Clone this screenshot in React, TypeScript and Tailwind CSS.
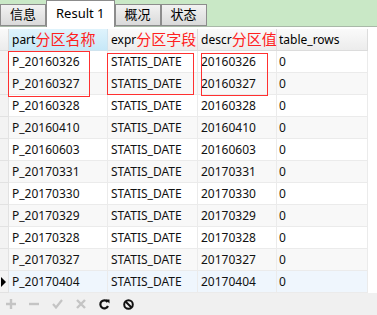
const rows = [
  ['P_20160326', 'STATIS_DATE', '20160326', '0'],
  ['P_20160327', 'STATIS_DATE', '20160327', '0'],
  ['P_20160328', 'STATIS_DATE', '20160328', '0'],
  ['P_20160410', 'STATIS_DATE', '20160410', '0'],
  ['P_20160603', 'STATIS_DATE', '20160603', '0'],
  ['P_20170331', 'STATIS_DATE', '20170331', '0'],
  ['P_20170330', 'STATIS_DATE', '20170330', '0'],
  ['P_20170329', 'STATIS_DATE', '20170329', '0'],
  ['P_20170328', 'STATIS_DATE', '20170328', '0'],
  ['P_20170327', 'STATIS_DATE', '20170327', '0'],
  ['P_20170404', 'STATIS_DATE', '20170404', '0'],
]

const font = { fontFamily: '"Noto Sans", "Noto Sans CJK SC", sans-serif' }
const cols = 'grid grid-cols-[9px_99px_90px_79px_91px_9px]'

function Tab({ label, active }: { label: string; active?: boolean }) {
  if (active) {
    return (
      <div className="h-[27px] -mb-px px-[9px] flex items-center bg-white border border-b-0 border-[#8c8c8c] text-[13px] text-black z-10">
        {label}
      </div>
    )
  }
  return (
    <div className="h-[22px] w-[46px] flex items-center justify-center bg-gradient-to-b from-[#f2f2f2] to-[#dadada] border border-[#8c8c8c] text-[13px] text-black">
      {label}
    </div>
  )
}

export default function App() {
  return (
    <div className="w-[377px] h-[315px] bg-white overflow-hidden flex flex-col" style={font}>
      {/* tabs */}
      <div className="h-[27px] shrink-0 flex items-end bg-[#c9e8c6] border-b border-[#a9b9a8]">
        <Tab label="信息" />
        <Tab label="Result 1" active />
        <Tab label="概况" />
        <Tab label="状态" />
      </div>
      <div className="h-[2px] shrink-0" />

      <div className="relative flex-1">
        {/* header */}
        <div className={`${cols} h-[22px] text-[12px] text-black`}>
          <div className="bg-gradient-to-b from-[#fafafa] to-[#ececec] border-r border-b border-[#dcdcdc]" />
          <div className="flex items-center pl-[3px] bg-gradient-to-b from-[#dff3fc] to-[#c6e8f8] border-r border-b border-[#cfe3ee] whitespace-nowrap">
            part<span className="text-[15px] leading-none text-[#ff2020]">分区名称</span>
          </div>
          <div className="flex items-center pl-[3px] bg-gradient-to-b from-[#fafafa] to-[#ececec] border-r border-b border-[#dcdcdc] whitespace-nowrap overflow-visible">
            expr<span className="text-[15px] leading-none text-[#ff2020]">分区字段</span>
          </div>
          <div className="flex items-center pl-[3px] bg-gradient-to-b from-[#fafafa] to-[#ececec] border-r border-b border-[#dcdcdc] whitespace-nowrap">
            descr<span className="text-[15px] leading-none text-[#ff2020]">分区值</span>
          </div>
          <div className="flex items-center pl-[2px] bg-gradient-to-b from-[#fafafa] to-[#ececec] border-r border-b border-[#dcdcdc]">
            table_rows
          </div>
          <div className="bg-white" />
        </div>

        {/* rows */}
        {rows.map((r, i) => {
          const last = i === rows.length - 1
          const bg = last ? 'bg-[#eff6fd]' : i % 2 === 1 ? 'bg-[#f8f8f8]' : 'bg-white'
          return (
            <div key={i} className={`${cols} h-[22px] text-[12px] text-[#111]`}>
              <div className="flex items-center bg-[#f3f3f3] border-r border-b border-[#e2e2e2]">
                {last && (
                  <svg width="6" height="10" viewBox="0 0 6 10" className="ml-[1px]">
                    <path d="M0 0 L5 5 L0 10 Z" fill="#000" />
                  </svg>
                )}
              </div>
              <div className={`flex items-center pl-[3px] ${bg} border-r border-b border-[#ebebeb]`}>{r[0]}</div>
              <div className={`flex items-center pl-[3px] ${bg} border-r border-b border-[#ebebeb]`}>{r[1]}</div>
              <div className={`flex items-center pl-[3px] ${bg} border-r border-b border-[#ebebeb]`}>{r[2]}</div>
              <div className={`flex items-center pl-[2px] ${bg} border-r border-b border-[#ebebeb]`}>{r[3]}</div>
              <div className="bg-white" />
            </div>
          )
        })}

        {/* red annotation boxes */}
        <div className="absolute left-[8px] top-[22px] w-[82px] h-[46px] border border-[#ff3030]" />
        <div className="absolute left-[107px] top-[24px] w-[87px] h-[42px] border border-[#ff3030]" />
        <div className="absolute left-[201px] top-[24px] w-[67px] h-[43px] border border-[#ff3030]" />
      </div>

      {/* footer toolbar */}
      <div className="h-[22px] shrink-0 bg-[#f0f0f0] flex items-center gap-[13px] pl-[6px]">
        <svg width="10" height="10" viewBox="0 0 10 10">
          <path d="M5 0 V10 M0 5 H10" stroke="#c4c4c4" strokeWidth="2.4" />
        </svg>
        <svg width="10" height="10" viewBox="0 0 10 10">
          <path d="M0 5 H10" stroke="#c4c4c4" strokeWidth="2.4" />
        </svg>
        <svg width="11" height="10" viewBox="0 0 11 10">
          <path d="M1 5 L4 8.5 L10 1" stroke="#c4c4c4" strokeWidth="2.2" fill="none" />
        </svg>
        <svg width="10" height="10" viewBox="0 0 10 10">
          <path d="M1 1 L9 9 M9 1 L1 9" stroke="#c4c4c4" strokeWidth="2.4" />
        </svg>
        <svg width="11" height="11" viewBox="0 0 11 11">
          <path d="M8.6 3 A4 4 0 1 0 9 7" stroke="#111" strokeWidth="2.2" fill="none" />
          <path d="M6.5 0.5 L10.5 0.5 L10.5 4.5 Z" fill="#111" />
        </svg>
        <svg width="11" height="11" viewBox="0 0 11 11">
          <circle cx="5.5" cy="5.5" r="4.3" stroke="#111" strokeWidth="2" fill="none" />
          <path d="M2.5 2.5 L8.5 8.5" stroke="#111" strokeWidth="2" />
        </svg>
      </div>
    </div>
  )
}
